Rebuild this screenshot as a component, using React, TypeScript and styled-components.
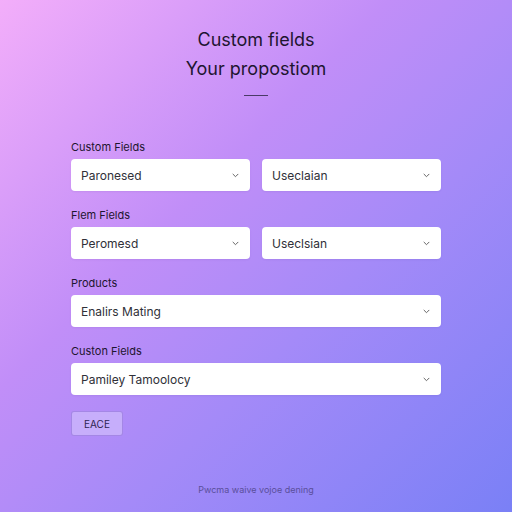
import React from "react";
import styled, { createGlobalStyle } from "styled-components";

const Global = createGlobalStyle`
  html, body { margin: 0; padding: 0; }
  body {
    width: 512px;
    height: 512px;
    overflow: hidden;
    font-family: "Inter", "Liberation Sans", sans-serif;
  }
`;

const Page = styled.div`
  width: 512px;
  height: 512px;
  box-sizing: border-box;
  background: linear-gradient(135deg, #f3aefa 0%, #c18ef8 38%, #a48af8 62%, #7a80f6 100%);
  display: flex;
  flex-direction: column;
  align-items: center;
  padding-top: 26px;
`;

const Title = styled.h1<{ $gap?: number }>`
  margin: ${(p) => p.$gap ?? 0}px 0 0 0;
  font-size: 18px;
  font-weight: 400;
  color: #1e1530;
  line-height: 28px;
  text-align: center;
`;

const Divider = styled.div`
  width: 24px;
  height: 1px;
  background: #4a3a66;
  margin-top: 12px;
`;

const Form = styled.div`
  width: 370px;
  margin-top: 44px;
  display: flex;
  flex-direction: column;
  gap: 17px;
`;

const Group = styled.div`
  display: flex;
  flex-direction: column;
  gap: 5px;
`;

const Label = styled.div`
  font-size: 11px;
  color: #1e1530;
  line-height: 14px;
`;

const Row = styled.div`
  display: grid;
  grid-template-columns: 1fr 1fr;
  gap: 12px;
`;

const Select = styled.div`
  height: 32px;
  box-sizing: border-box;
  background: #ffffff;
  border-radius: 4px;
  display: flex;
  align-items: center;
  justify-content: space-between;
  padding: 0 11px 0 10px;
  font-size: 12px;
  color: #303038;
  box-shadow: 0 1px 2px rgba(60, 30, 120, 0.08);
`;

const Chevron = () => (
  <svg width="7" height="5" viewBox="0 0 7 5" fill="none">
    <path d="M1 1.2 L3.5 3.7 L6 1.2" stroke="#666" strokeWidth="1" strokeLinecap="round" strokeLinejoin="round" />
  </svg>
);

const Button = styled.button`
  align-self: flex-start;
  margin-top: -1px;
  width: 52px;
  height: 25px;
  border-radius: 3px;
  border: 1px solid rgba(150, 120, 220, 0.7);
  background: rgba(205, 185, 252, 0.75);
  font-family: inherit;
  font-size: 10px;
  color: #2e2450;
  padding: 0;
`;

const Footer = styled.div`
  margin-top: auto;
  margin-bottom: 17px;
  font-size: 9px;
  color: #5a4e9a;
`;

function Field({ value }: { value: string }) {
  return (
    <Select>
      <span>{value}</span>
      <Chevron />
    </Select>
  );
}

export default function App() {
  return (
    <>
      <Global />
      <Page>
        <Title>Custom fields</Title>
        <Title $gap={1}>Your propostiom</Title>
        <Divider />
        <Form>
          <Group>
            <Label>Custom Fields</Label>
            <Row>
              <Field value="Paronesed" />
              <Field value="Useclaian" />
            </Row>
          </Group>
          <Group>
            <Label>Flem Fields</Label>
            <Row>
              <Field value="Peromesd" />
              <Field value="Useclsian" />
            </Row>
          </Group>
          <Group>
            <Label>Products</Label>
            <Field value="Enalirs Mating" />
          </Group>
          <Group>
            <Label>Custon Fields</Label>
            <Field value="Pamiley Tamoolocy" />
          </Group>
          <Button>EACE</Button>
        </Form>
        <Footer>Pwcma waive vojoe dening</Footer>
      </Page>
    </>
  );
}
